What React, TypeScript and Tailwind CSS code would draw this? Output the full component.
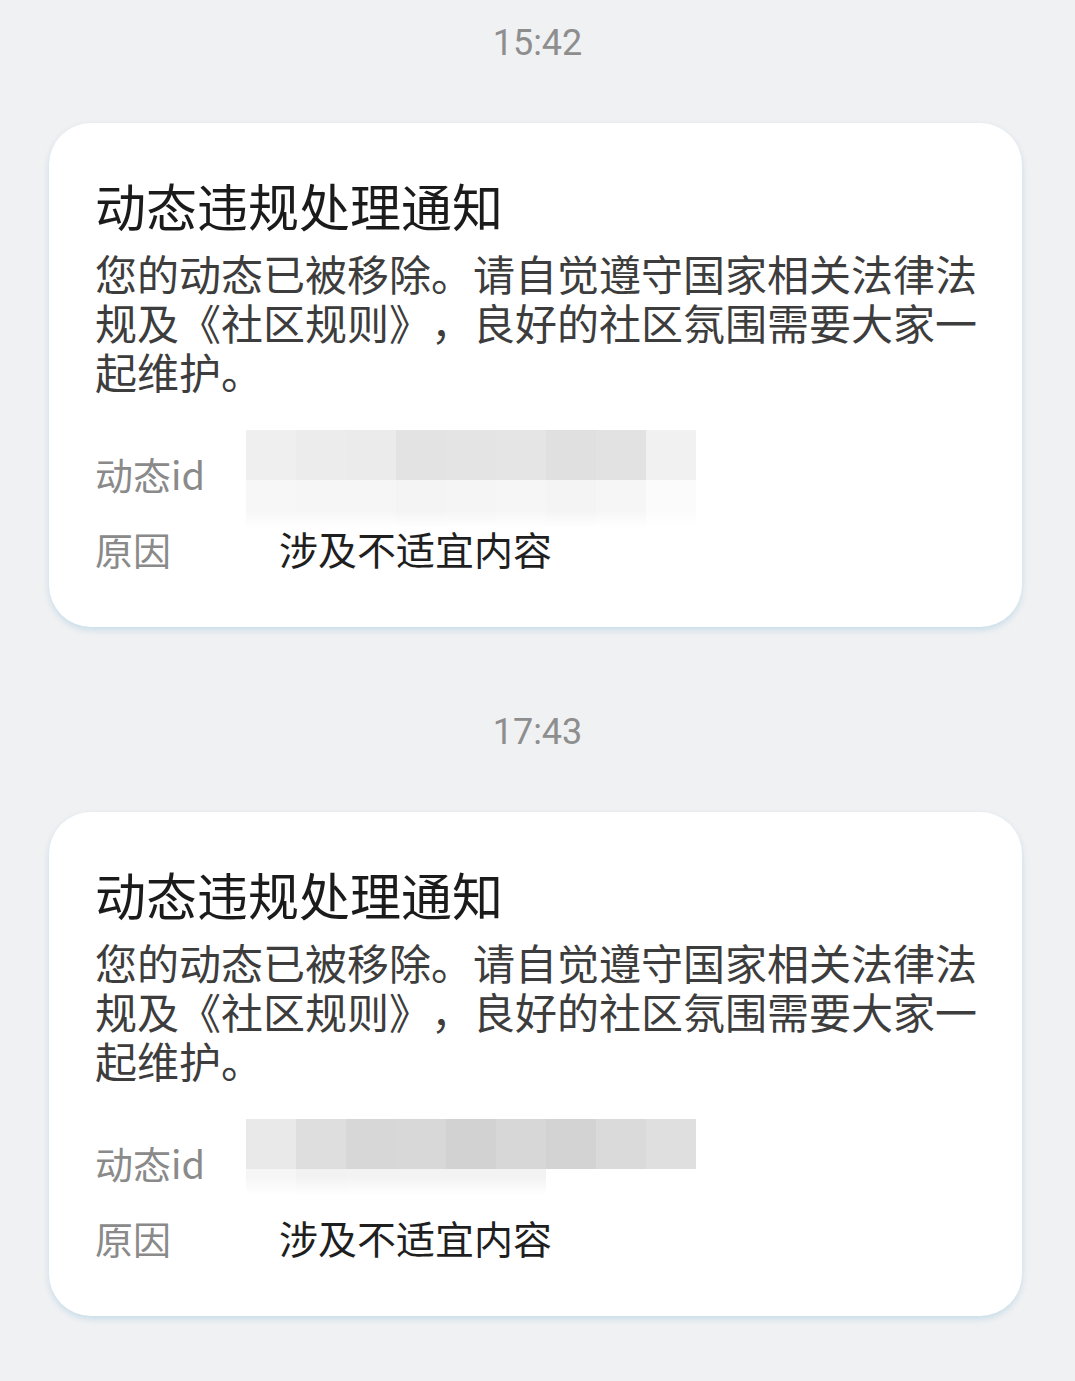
import React from "react";

const font = { fontFamily: '"Noto Sans CJK SC", "Noto Sans", sans-serif' };

type Mosaic = { row1: string[]; row2: string[]; row2h: number };

const mosaics: Mosaic[] = [
  {
    row1: ["#efefef", "#ececec", "#ebebeb", "#e3e3e3", "#e4e4e4", "#e5e5e5", "#e0e0e0", "#e2e2e2", "#f1f1f1"],
    row2: ["#f7f7f7", "#f6f6f6", "#f6f6f6", "#f4f4f4", "#f5f5f5", "#f6f6f6", "#f4f4f4", "#f6f6f6", "#fbfbfb"],
    row2h: 48,
  },
  {
    row1: ["#e9e9e9", "#dedede", "#d7d7d7", "#d8d8d8", "#d2d2d2", "#d7d7d7", "#d3d3d3", "#dadada", "#dfdfdf"],
    row2: ["#f6f6f6", "#f2f2f2", "#f3f3f3", "#f3f3f3", "#f3f3f3", "#f3f3f3", "#ffffff", "#ffffff", "#ffffff"],
    row2h: 26,
  },
];

function MosaicBlock({ m }: { m: Mosaic }) {
  return (
    <div className="relative w-[450px] -mt-[5px]">
      <div className="flex">
        {m.row1.map((c, i) => (
          <div key={i} className="w-[50px] h-[50px]" style={{ backgroundColor: c }} />
        ))}
      </div>
      <div className="flex relative">
        {m.row2.map((c, i) => (
          <div key={i} className="w-[50px]" style={{ backgroundColor: c, height: m.row2h }} />
        ))}
        <div className="absolute left-0 right-0 bottom-0 h-[18px] bg-gradient-to-b from-transparent to-white" />
      </div>
    </div>
  );
}

function Card({ m }: { m: Mosaic }) {
  return (
    <div className="ml-[49px] w-[973px] mt-[41px] h-[504px] rounded-[42px] bg-white shadow-[0_3px_6px_rgba(150,195,220,0.45)] pl-[46px] pr-[30px] pt-[52px]">
      <div className="text-[51px] leading-[60px] text-[#1b1b1b] whitespace-nowrap">动态违规处理通知</div>
      <div className="mt-[13px] text-[42px] leading-[49px] text-[#3d3d3d] whitespace-nowrap [text-spacing-trim:space-all]">
        您的动态已被移除。请自觉遵守国家相关法律法
        <br />
        规及《社区规则》，良好的社区氛围需要大家一
        <br />
        起维护。
      </div>
      <div className="mt-[40px] flex h-[77px] items-center text-[38px]">
        <div className="w-[151px] text-[#8a8a8a] leading-[77px]">动态id</div>
        <div className="self-start">
          <MosaicBlock m={m} />
        </div>
      </div>
      <div className="flex h-[77px] items-center text-[38px]">
        <div className="w-[184px] text-[#8a8a8a] -mt-[4px]">原因</div>
        <div className="text-[39px] text-[#1f1f1f] -mt-[4px]">涉及不适宜内容</div>
      </div>
    </div>
  );
}

function Time({ t }: { t: string }) {
  return (
    <div
      className="h-[82px] flex items-center justify-center text-[36px] text-[#8e8e8e] pt-[4px]"
      style={{ fontFamily: 'Roboto, "Noto Sans", sans-serif' }}
    >
      {t}
    </div>
  );
}

export default function App() {
  return (
    <div className="w-[1075px] min-h-[1381px] bg-[#f0f1f3] overflow-hidden" style={font}>
      <section>
        <Time t="15:42" />
        <Card m={mosaics[0]} />
      </section>
      <section className="mt-[62px]">
        <Time t="17:43" />
        <Card m={mosaics[1]} />
      </section>
    </div>
  );
}
